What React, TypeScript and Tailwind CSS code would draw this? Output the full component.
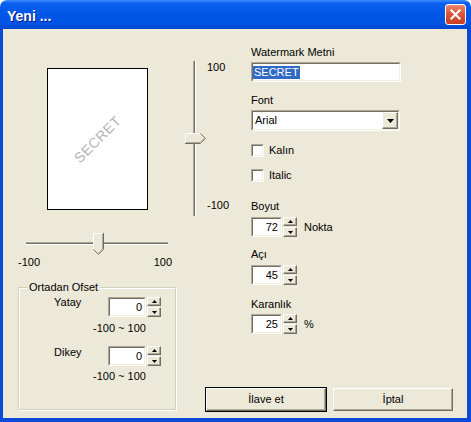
import React from 'react';

// classic sunken field (edit, combo, checkbox)
function Sunken({ className = '', children }: { className?: string; children?: React.ReactNode }) {
  return (
    <div className={`border border-t-[#aca899] border-l-[#aca899] border-b-white border-r-white ${className}`}>
      <div className="w-full h-full border border-t-[#716f64] border-l-[#716f64] border-b-[#f1efe2] border-r-[#f1efe2] bg-white flex items-center">
        {children}
      </div>
    </div>
  );
}

const raised =
  'border border-t-white border-l-white border-b-[#716f64] border-r-[#716f64] shadow-[inset_-1px_-1px_0_#aca899] bg-[#ece9d8]';

function SpinArrow({ up }: { up?: boolean }) {
  return (
    <svg width="5" height="3" viewBox="0 0 5 3">
      <polygon points={up ? '2.5,0 5,3 0,3' : '0,0 5,0 2.5,3'} fill="#000" />
    </svg>
  );
}

function Spinner({ value, width }: { value: string; width: string }) {
  return (
    <div className="flex items-start">
      <Sunken className={`${width} h-[20px]`}>
        <span className="w-full text-right pr-[2px]">{value}</span>
      </Sunken>
      <div className="ml-[1px] flex flex-col gap-[1px] w-[14px] h-[20px]">
        <div className={`h-[9px] flex items-center justify-center ${raised}`}>
          <SpinArrow up />
        </div>
        <div className={`h-[10px] flex items-center justify-center ${raised}`}>
          <SpinArrow />
        </div>
      </div>
    </div>
  );
}

function Check({ label }: { label: string }) {
  return (
    <div className="flex items-center h-[13px]">
      <Sunken className="w-[13px] h-[13px]" />
      <span className="ml-[5px]">{label}</span>
    </div>
  );
}

function CloseButton() {
  return (
    <div className="w-[21px] h-[21px] rounded-[3px] border border-white bg-[linear-gradient(180deg,#e98a6c_0%,#e0553a_45%,#c93d22_100%)] flex items-center justify-center">
      <svg width="13" height="13" viewBox="0 0 13 13">
        <path d="M2.5 2.5 L10.5 10.5 M10.5 2.5 L2.5 10.5" stroke="#fff" strokeWidth="2.2" strokeLinecap="square" />
      </svg>
    </div>
  );
}

export default function App() {
  return (
    <div className="w-[471px] h-[422px] bg-white flex flex-col font-['Liberation_Sans',Arial,sans-serif] text-[11px] leading-[13px] text-black select-none">
      {/* Title bar */}
      <div className="h-[29px] rounded-t-[7px] flex items-center justify-between pl-[7px] pr-[5px] bg-[linear-gradient(180deg,#3a8cfb_0%,#0a5ff0_12%,#0056e6_50%,#0052e2_82%,#0046d0_100%)]">
        <span className="pt-[2px] text-white font-bold text-[14px] leading-[16px] [text-shadow:1px_1px_0_#0a1883]">Yeni ...</span>
        <CloseButton />
      </div>

      {/* Frame */}
      <div className="flex-1 flex bg-[#0a4ad6] pl-[3px] pr-[4px] pb-[4px]">
        <div className="flex-1 flex bg-[#ece9d8]">
          {/* Left column */}
          <div className="w-[175px] flex flex-col">
            <div className="ml-[44px] mt-[39px] w-[101px] h-[142px] border border-black bg-white flex items-center justify-center overflow-hidden">
              <span className="-rotate-45 text-[14px] text-[#b4b4b4] tracking-[0.5px]">SECRET</span>
            </div>

            {/* Horizontal trackbar */}
            <div className="ml-[23px] mt-[23px] relative w-[142px] h-[22px]">
              <div className="mt-[9px] h-[3px] border-t border-t-[#aca899] bg-[#716f64] border-b border-b-white" />
              <svg className="absolute left-[67px] top-0" width="11" height="22" viewBox="0 0 11 22">
                <polygon points="0,0 10,0 10,16 5,21 0,16" fill="#ece9d8" />
                <path d="M0.5 16 V0.5 H10" stroke="#fff" fill="none" />
                <path d="M10.5 0 V16.3 L5.2 21.6 M5 21 L0.5 16.5" stroke="#716f64" fill="none" />
                <path d="M9.5 1 V16 L5 20.4" stroke="#aca899" fill="none" />
              </svg>
            </div>
            <div className="ml-[15px] mt-[1px] w-[154px] flex justify-between">
              <span>-100</span>
              <span>100</span>
            </div>

            {/* Group box */}
            <div className="ml-[15px] mt-[18px] w-[158px] h-[123px] relative border border-[#d0d0bf] shadow-[inset_1px_1px_0_#fff,1px_1px_0_#fff]">
              <span className="absolute -top-[7px] left-[8px] px-[2px] bg-[#ece9d8]">Ortadan Ofset</span>
              <div className="pt-[9px] flex flex-col">
                <div className="flex items-start pl-[35px]">
                  <span className="w-[54px] -mt-[1px]">Yatay</span>
                  <Spinner value="0" width="w-[38px]" />
                </div>
                <span className="ml-[74px] mt-[5px]">-100 ~ 100</span>
                <div className="flex items-start pl-[35px] mt-[11px]">
                  <span className="w-[54px]">Dikey</span>
                  <Spinner value="0" width="w-[38px]" />
                </div>
                <span className="ml-[74px] mt-[4px]">-100 ~ 100</span>
              </div>
            </div>
          </div>

          {/* Right area */}
          <div className="flex-1 flex flex-col">
            <div className="flex items-start">
              {/* Vertical trackbar */}
              <div className="ml-[7px] mt-[32px] relative w-[21px] h-[155px]">
                <div className="ml-[8px] w-[3px] h-full border-l border-l-[#aca899] bg-[#716f64] border-r border-r-white" />
                <svg className="absolute left-0 top-[72px]" width="21" height="11" viewBox="0 0 21 11">
                  <polygon points="0,0 15,0 20,5 15,10 0,10" fill="#ece9d8" />
                  <path d="M0.5 10 V0.5 H15" stroke="#fff" fill="none" />
                  <path d="M0 10.5 H15.3 L20.6 5.2 M20 5 L15.5 0.5" stroke="#716f64" fill="none" />
                  <path d="M1 9.5 H15 L19.4 5" stroke="#aca899" fill="none" />
                </svg>
              </div>
              <div className="ml-[1px] w-[44px] mt-[32px] h-[151px] flex flex-col justify-between">
                <span>100</span>
                <span>-100</span>
              </div>

              {/* Fields */}
              <div className="flex flex-col">
                <span className="mt-[17px]">Watermark Metni</span>
                <Sunken className="mt-[3px] w-[150px] h-[20px]">
                  <span className="ml-[0px] px-[1px] bg-[#316ac5] text-white">SECRET</span>
                </Sunken>
                <span className="mt-[12px]">Font</span>
                <Sunken className="mt-[3px] w-[149px] h-[21px]">
                  <span className="flex-1 pl-[2px]">Arial</span>
                  <div className={`w-[16px] h-[17px] flex items-center justify-center ${raised}`}>
                    <svg width="7" height="4" viewBox="0 0 7 4">
                      <polygon points="0,0 7,0 3.5,4" fill="#000" />
                    </svg>
                  </div>
                </Sunken>
                <div className="mt-[13px]">
                  <Check label="Kalın" />
                </div>
                <div className="mt-[12px]">
                  <Check label="Italic" />
                </div>
                <span className="mt-[18px]">Boyut</span>
                <div className="mt-[4px] flex items-center">
                  <Spinner value="72" width="w-[31px]" />
                  <span className="ml-[7px]">Nokta</span>
                </div>
                <span className="mt-[11px]">Açı</span>
                <div className="mt-[4px]">
                  <Spinner value="45" width="w-[31px]" />
                </div>
                <span className="mt-[13px]">Karanlık</span>
                <div className="mt-[3px] flex items-center">
                  <Spinner value="25" width="w-[31px]" />
                  <span className="ml-[7px]">%</span>
                </div>
              </div>
            </div>

            <div className="flex-1" />

            {/* Buttons */}
            <div className="ml-[27px] mb-[6px] flex items-center">
              <div className="w-[122px] h-[25px] border border-black">
                <div className={`w-full h-full flex items-center justify-center ${raised}`}>İlave et</div>
              </div>
              <div className={`ml-[6px] w-[120px] h-[23px] flex items-center justify-center ${raised}`}>İptal</div>
            </div>
          </div>
        </div>
      </div>
    </div>
  );
}
